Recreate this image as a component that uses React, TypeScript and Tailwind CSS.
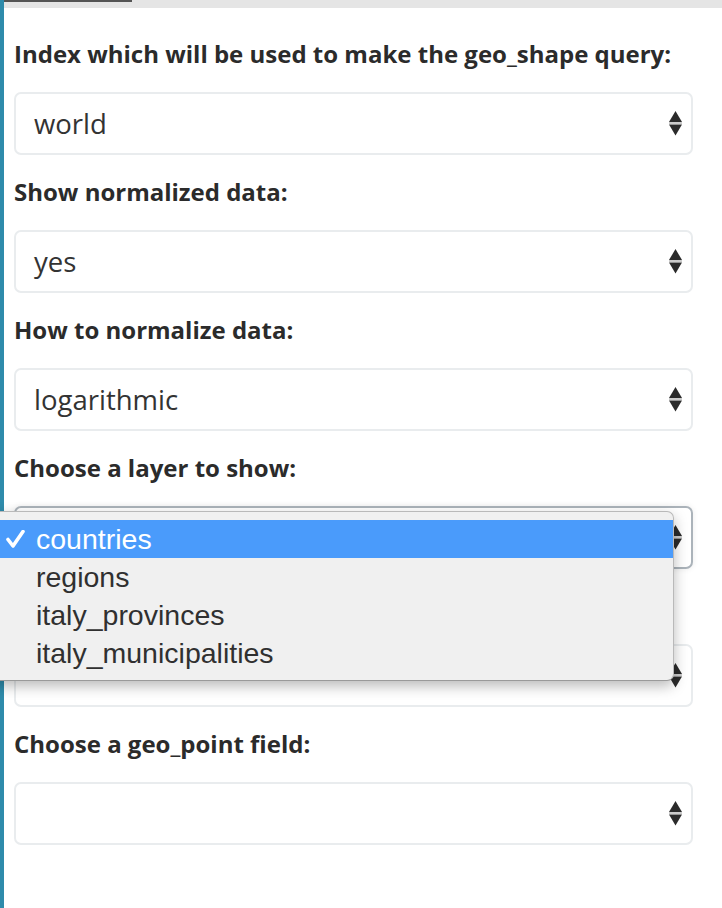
import React from 'react';

const labelFont = { fontFamily: '"Open Sans", sans-serif' };

function Arrows() {
    return (
        <svg width="13" height="25" viewBox="0 0 13 25" className="shrink-0">
            <polygon points="6.5,0 13,11 0,11" fill="#2b2b2b" />
            <rect x="0" y="11.5" width="13" height="1" fill="#9a9a9a" />
            <polygon points="0,13.5 13,13.5 6.5,24.5" fill="#2b2b2b" />
        </svg>
    );
}

function FakeSelect({ value, focused }: { value: string; focused?: boolean }) {
    return (
        <div
            className={
                'flex h-[63px] items-center justify-between rounded-[7px] border-2 bg-white pl-[18px] pr-[9px] ' +
                (focused ? 'border-[#abb3ba] shadow-[0_0_6px_rgba(0,0,0,0.08)]' : 'border-[#e9ecee]')
            }
        >
            <span className="text-[27.5px] text-[#333]" style={labelFont}>
                {value}
            </span>
            <Arrows />
        </div>
    );
}

// the label of the fifth field sits under the open dropdown, so it is left empty
const fields = [
    { label: 'Index which will be used to make the geo_shape query:', value: 'world' },
    { label: 'Show normalized data:', value: 'yes' },
    { label: 'How to normalize data:', value: 'logarithmic' },
    { label: 'Choose a layer to show:', value: '', focused: true },
    { label: '', value: '' },
    { label: 'Choose a geo_point field:', value: '' },
];

const options = ['countries', 'regions', 'italy_provinces', 'italy_municipalities'];

export default function App() {
    return (
        <div className="relative flex h-[908px] w-[722px] overflow-hidden bg-white">
            <div className="w-[4px] shrink-0 bg-[#2e8bab]" />
            <div className="flex flex-1 flex-col">
                <div className="h-[8px] bg-[#e5e5e5]">
                    <div className="h-[2px] w-[128px] bg-[#555]" />
                </div>
                <div className="w-[689px] pl-[10px] pt-[31px]">
                    {fields.map((f, i) => (
                        <div key={i} className="mb-[22px]">
                            <div
                                className="mb-[23px] h-[30px] whitespace-nowrap text-[24px] font-bold leading-[30px] text-[#2b2b2b]"
                                style={labelFont}
                            >
                                {f.label}
                            </div>
                            <FakeSelect value={f.value} focused={f.focused} />
                        </div>
                    ))}
                </div>
            </div>

            {/* open native dropdown of the layer select */}
            <div
                className="absolute left-[-8px] top-[511px] w-[682px] rounded-[7px] border border-[#b9b9b9] border-b-[#9a9a9a] bg-[#f0f0f0] py-[8px] shadow-[0_5px_14px_rgba(0,0,0,0.28)]"
                style={{ fontFamily: '"Liberation Sans", Arial, sans-serif' }}
            >
                {options.map((o, i) => (
                    <div
                        key={o}
                        className={
                            'relative flex h-[38px] items-center pl-[43px] text-[28.5px] ' +
                            (i === 0 ? 'bg-[#4a9bfb] text-white' : 'text-[#303030]')
                        }
                    >
                        {i === 0 && (
                            <svg
                                width="19"
                                height="18"
                                viewBox="0 0 19 18"
                                className="absolute left-[13px] top-[10px]"
                            >
                                <path
                                    d="M2 9.5 L7 16 L17 1.5"
                                    fill="none"
                                    stroke="white"
                                    strokeWidth="3.6"
                                    strokeLinecap="round"
                                    strokeLinejoin="round"
                                />
                            </svg>
                        )}
                        {o}
                    </div>
                ))}
            </div>
        </div>
    );
}
